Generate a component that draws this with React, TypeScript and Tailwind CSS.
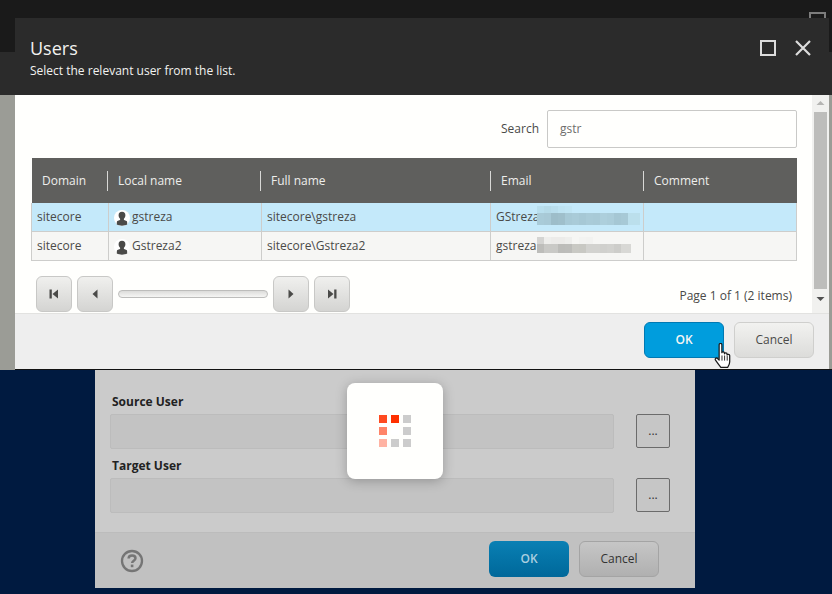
import React from "react";

const font = "font-['Open_Sans','Noto_Sans',sans-serif]";

const columns = [
  { label: "Domain", cls: "w-[76px] pl-[10px]" },
  { label: "Local name", cls: "w-[153px] pl-[10px]" },
  { label: "Full name", cls: "w-[230px] pl-[10px]" },
  { label: "Email", cls: "w-[153px] pl-[10px]" },
  { label: "Comment", cls: "flex-1 pl-[10px]" },
];

function UserIcon() {
  return (
    <svg width="16" height="16" viewBox="0 0 16 16" className="mr-[2px] mt-[2px] shrink-0">
      <circle cx="8" cy="8" r="8" fill="#ffffff" />
      <path
        d="M8 1.800c-2.300 0-3.400 1.500-3.400 3.500 0 1.500.6 2.800 1.500 3.500v1.300c-1.300.4-2.900.9-3.100 1.500-.2.600-.2 1.900-.2 3 1.400.8 3.200 1.100 5.200 1.100s3.800-.3 5.200-1.100c0-1.100 0-2.400-.2-3-.2-.6-1.800-1.100-3.100-1.500V8.800c.9-.7 1.500-2 1.500-3.500 0-2-1.100-3.500-3.400-3.500z"
        fill="#4a4a48"
      />
    </svg>
  );
}

function Mosaic({ blocks }: { blocks: string[] }) {
  return (
    <div className="flex">
      {blocks.map((c, i) => (
        <div key={i} className={c} />
      ))}
    </div>
  );
}

function Row({
  bg,
  name,
  full,
  email,
  children,
}: {
  bg: string;
  name: string;
  full: string;
  email: string;
  children: React.ReactNode;
}) {
  const cell = "h-full flex items-center pl-[5px] border-r border-[#cdcdcb]";
  return (
    <div className={`flex h-[29px] border-b border-[#cdcdcb] text-[12px] text-[#4a4a48] ${bg}`}>
      <div className={`${cell} w-[77px]`}>sitecore</div>
      <div className={`${cell} w-[153px]`}>
        <UserIcon />
        {name}
      </div>
      <div className={`${cell} w-[229px]`}>{full}</div>
      <div className={`${cell} w-[153px] relative`}>
        {email}
        {children}
      </div>
      <div className="flex-1" />
    </div>
  );
}

function PagerButton({ children }: { children: React.ReactNode }) {
  return (
    <div className="w-[36px] h-[36px] rounded-[6px] border border-[#c8c8c6] bg-gradient-to-b from-[#f0f0ee] to-[#d4d4d2] flex items-center justify-center">
      <svg width="10" height="10" viewBox="0 0 10 10" fill="#4a4a48">
        {children}
      </svg>
    </div>
  );
}

function BrowseButton() {
  return (
    <div className="w-[34px] h-[34px] rounded-[2px] border border-[#6b6b6b] bg-[#c6c6c6] flex items-center justify-center text-[12px] leading-none text-[#333333]">
      ...
    </div>
  );
}

function HandCursor() {
  return (
    <svg width="18" height="25" viewBox="1 1 14.800 22" className="absolute left-[714px] top-[343px]">
      <path
        d="M5 2.500c0-1.600 2.400-1.600 2.400 0v7c0-.9 2.300-1 2.300.3v.7c0-1 2.300-1 2.300.3v.8c0-1 2.300-.9 2.300.5v5.400c0 2.500-1 3.600-1.800 4.900H6.500c-1.300-1.600-3-3.800-4.700-6.300-.8-1.300.8-2.500 1.800-1.500L5 16V2.500z"
        fill="#ffffff"
        stroke="#1b1b1b"
        strokeWidth="1.100"
        strokeLinejoin="round"
      />
      <path d="M7.500 12v4.500M9.800 12v4.500M12.100 12.500v4" stroke="#1b1b1b" strokeWidth="0.800" fill="none" />
    </svg>
  );
}

const loaderDots = [
  "bg-[#ff4a20]",
  "bg-[#ff3000]",
  "bg-[#cccccc]",
  "bg-[#ff8468]",
  "bg-[#ffffff]",
  "bg-[#cccccc]",
  "bg-[#ffb3a3]",
  "bg-[#cccccc]",
  "bg-[#cccccc]",
];

export default function App() {
  return (
    <div className={`relative w-[832px] h-[594px] overflow-hidden bg-[#001a40] ${font}`}>
      {/* Page behind */}
      <div className="h-[52px] bg-[#1a1a1a] relative">
        <div className="absolute left-[809px] top-[12px] w-[17px] h-[17px] border-[2px] border-[#7c7c7c]" />
      </div>
      <div className="h-[43px] bg-[#2b2b2b]" />
      <div className="h-[275px] bg-[#9b9c96]" />

      {/* Lower dialog */}
      <div className="ml-[95px] w-[600px] h-[218px] flex flex-col bg-[#cbcbcb]">
        <div className="flex-1 pl-[15px] pr-[25px] pt-[23px]">
          <div className="pl-[2px] text-[12px] leading-[17px] font-bold text-[#222222]">Source User</div>
          <div className="flex mt-[4px] justify-between">
            <div className="w-[504px] h-[35px] rounded-[2px] border border-[#bcbcbc] bg-[#c3c3c3]" />
            <BrowseButton />
          </div>
          <div className="pl-[2px] mt-[8px] text-[12px] leading-[17px] font-bold text-[#222222]">Target User</div>
          <div className="flex mt-[4px] justify-between">
            <div className="w-[504px] h-[35px] rounded-[2px] border border-[#bcbcbc] bg-[#c3c3c3]" />
            <BrowseButton />
          </div>
        </div>
        <div className="h-[56px] border-t border-[#bcbcbc] bg-[#c1c1c1] flex items-start pt-[8px] pl-[25px] pr-[36px]">
          <svg width="24" height="24" viewBox="0 0 24 24" fill="none" className="mt-[8px]">
            <circle cx="12" cy="12" r="10" stroke="#757575" strokeWidth="2.300" />
            <path
              d="M8.600 9.500c0-2 1.500-3.100 3.500-3.100 1.900 0 3.400 1 3.400 2.800 0 2.500-3.400 2.600-3.400 4.900"
              stroke="#757575"
              strokeWidth="2.500"
            />
            <rect x="10.800" y="15.600" width="2.600" height="2.600" fill="#757575" />
          </svg>
          <div className="flex-1" />
          <div className="w-[80px] h-[36px] rounded-[6px] bg-gradient-to-b from-[#0a80b4] to-[#00689a] flex items-center justify-center text-[12px] font-semibold text-[#a9cfe0]">
            OK
          </div>
          <div className="ml-[10px] w-[80px] h-[36px] rounded-[6px] border border-[#a4a4a4] bg-gradient-to-b from-[#c6c6c6] to-[#b0b0b0] flex items-center justify-center text-[12px] text-[#333333]">
            Cancel
          </div>
        </div>
      </div>

      {/* Loader */}
      <div className="absolute left-[347px] top-[383px] w-[96px] h-[96px] rounded-[8px] bg-[#fffffd] shadow-[0_2px_12px_rgba(0,0,0,0.25)] flex items-center justify-center">
        <div className="grid grid-cols-3 gap-[4px]">
          {loaderDots.map((c, i) => (
            <div key={i} className={`w-[8px] h-[8px] ${c}`} />
          ))}
        </div>
      </div>

      {/* Users modal */}
      <div className="absolute left-[15px] top-[18px] w-[814px] h-[351px] flex flex-col">
        <div className="h-[77px] bg-[#2b2b2b] flex pl-[15px] pr-[18px]">
          <div className="flex-1 pt-[18px]">
            <div className="text-[18px] leading-[25px] text-[#f2f2f0]">Users</div>
            <div className="text-[12px] leading-[16px] mt-[2px] text-[#f2f2f0]">
              Select the relevant user from the list.
            </div>
          </div>
          <div className="pt-[22px] flex gap-[19px] h-fit">
            <div className="w-[16px] h-[16px] border-[2px] border-[#dcdcdc]" />
            <svg width="16" height="16" viewBox="0 0 16 16" stroke="#dcdcdc" strokeWidth="2.200" fill="none">
              <path d="M1 1l14 14M15 1L1 15" />
            </svg>
          </div>
        </div>

        <div className="h-[218px] bg-[#fffffd] flex">
          <div className="w-[797px] pl-[16px] pr-[15px] pt-[15px] relative">
            <div className="flex justify-end items-center gap-[8px]">
              <span className="text-[12px] text-[#4a4a48]">Search</span>
              <div className="w-[250px] h-[38px] rounded-[2px] border border-[#c9c9c7] bg-[#fffffd] flex items-center pl-[12px] text-[12px] text-[#6e6e6c]">
                gstr
              </div>
            </div>
            <div className="mt-[10px] ml-[1px] h-[45px] bg-[#5f5f5d] flex items-center text-[12px] text-[#eeeeec]">
              {columns.map((c, i) => (
                <div
                  key={c.label}
                  className={`h-[20px] flex items-center ${c.cls} ${i < 4 ? "border-r border-[#d8d8d6]" : ""}`}
                >
                  {c.label}
                </div>
              ))}
            </div>
            <div className="border-l border-r border-[#cdcdcb]">
              <Row bg="bg-[#c4e9fa]" name="gstreza" full="sitecore\gstreza" email="GStreza">
                <div className="absolute left-[46px] top-[3px]">
                  <Mosaic
                    blocks={[
                      "w-[7px] h-[7px] bg-[#b9dfee]",
                      "w-[7px] h-[7px] bg-[#b6dbe9]",
                      "w-[7px] h-[7px] bg-[#b9deed]",
                      "w-[7px] h-[7px] bg-[#bee3f2]",
                      "w-[7px] h-[7px] bg-[#c0e5f4]",
                    ]}
                  />
                  <Mosaic
                    blocks={[
                      "w-[7px] h-[12px] bg-[#a9cbd8]",
                      "w-[7px] h-[12px] bg-[#a8c9d6]",
                      "w-[7px] h-[12px] bg-[#9dbdc9]",
                      "w-[7px] h-[12px] bg-[#9fbfcb]",
                      "w-[7px] h-[12px] bg-[#a7c9d6]",
                      "w-[7px] h-[12px] bg-[#a9cbd8]",
                      "w-[7px] h-[12px] bg-[#a6c8d5]",
                      "w-[7px] h-[12px] bg-[#a9cbd8]",
                      "w-[7px] h-[12px] bg-[#a8cad7]",
                      "w-[7px] h-[12px] bg-[#adcfdc]",
                      "w-[7px] h-[12px] bg-[#abcdda]",
                      "w-[7px] h-[12px] bg-[#a5c7d4]",
                      "w-[7px] h-[12px] bg-[#a7c9d6]",
                      "w-[12px] h-[12px] bg-[#bbdfec]",
                    ]}
                  />
                </div>
              </Row>
              <Row bg="bg-[#f6f6f4]" name="Gstreza2" full="sitecore\Gstreza2" email="gstreza">
                <div className="absolute left-[46px] top-[5px]">
                  <Mosaic
                    blocks={[
                      "w-[7px] h-[7px] bg-[#d4d4d2]",
                      "w-[7px] h-[7px] bg-[#eeeeec]",
                      "w-[7px] h-[7px] bg-[#ecebe9]",
                      "w-[7px] h-[7px] bg-[#ecebe9]",
                      "w-[7px] h-[7px] bg-[#eeeeec]",
                      "w-[7px] h-[7px] bg-[#f6f6f4]",
                      "w-[7px] h-[7px] bg-[#f3f3f1]",
                      "w-[7px] h-[7px] bg-[#f2f2f0]",
                    ]}
                  />
                  <Mosaic
                    blocks={[
                      "w-[7px] h-[9px] bg-[#bdbdba]",
                      "w-[7px] h-[9px] bg-[#c9c9c6]",
                      "w-[7px] h-[9px] bg-[#c9c9c6]",
                      "w-[7px] h-[9px] bg-[#bcbcb9]",
                      "w-[7px] h-[9px] bg-[#bdbdba]",
                      "w-[7px] h-[9px] bg-[#c9c9c4]",
                      "w-[7px] h-[9px] bg-[#c8c8c3]",
                      "w-[7px] h-[9px] bg-[#d2d2cf]",
                      "w-[7px] h-[9px] bg-[#d2d2cf]",
                      "w-[7px] h-[9px] bg-[#d0d0cd]",
                      "w-[7px] h-[9px] bg-[#d2d2cf]",
                      "w-[7px] h-[9px] bg-[#cdcdca]",
                      "w-[10px] h-[9px] bg-[#d8d8d5]",
                    ]}
                  />
                </div>
              </Row>
            </div>
            <div className="mt-[15px] pl-[5px] flex items-center gap-[5px]">
              <PagerButton>
                <path d="M.5.500h2.300v9H.5zM9 .5v9L3.500 5z" />
              </PagerButton>
              <PagerButton>
                <path d="M7.500.5v9L2.500 5z" />
              </PagerButton>
              <div className="w-[150px] h-[8px] rounded-full border border-[#bdbdbb] bg-gradient-to-b from-[#dcdcda] to-[#f6f6f4]" />
              <PagerButton>
                <path d="M2.500.5v9L7.500 5z" />
              </PagerButton>
              <PagerButton>
                <path d="M1 .5v9L6.500 5zM7.200.5h2.300v9H7.200z" />
              </PagerButton>
              <div className="flex-1 pr-[5px] pt-[4px] text-right text-[12px] text-[#4a4a48]">Page 1 of 1 (2 items)</div>
            </div>
          </div>
          <div className="w-[17px] bg-[#f1f1ef] flex flex-col items-center justify-between">
            <svg width="17" height="17" viewBox="0 0 17 17" fill="#b5b5b3">
              <path d="M8.500 6l4 4h-8z" />
            </svg>
            <div className="flex-1 w-[13px] bg-[#bdbdbb]" />
            <svg width="17" height="24" viewBox="0 0 17 24" fill="#505050">
              <path d="M4.500 8h8l-4 4z" />
            </svg>
          </div>
        </div>

        <div className="flex-1 border-t border-[#e2e2e0] bg-[#eeeeee] flex justify-end items-start pt-[8px] pr-[15px] gap-[10px]">
          <div className="w-[80px] h-[36px] rounded-[6px] border border-[#0079b3] bg-[#009ddd] flex items-center justify-center text-[12px] font-semibold text-[#f6f6f4]">
            OK
          </div>
          <div className="w-[80px] h-[36px] rounded-[6px] border border-[#cfcfcd] bg-gradient-to-b from-[#f2f2f0] to-[#dcdcda] flex items-center justify-center text-[12px] text-[#4a4a48]">
            Cancel
          </div>
        </div>
      </div>
      <div className="absolute left-[15px] right-0 top-[369px] h-px bg-[#111111]" />
      <HandCursor />
    </div>
  );
}
